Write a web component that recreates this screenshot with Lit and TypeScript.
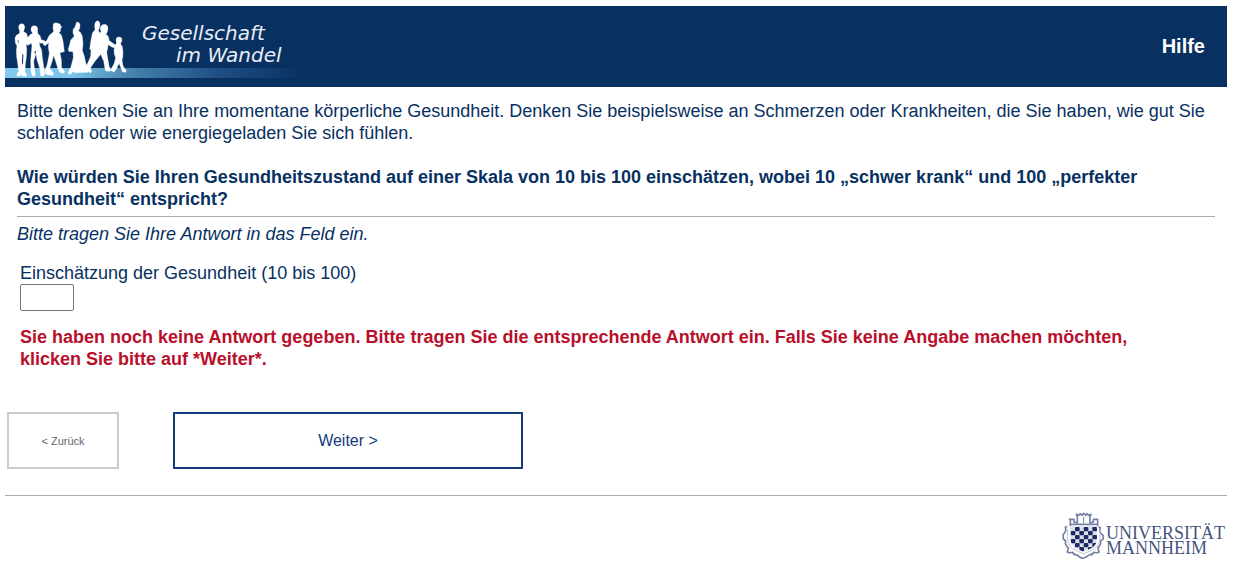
import { LitElement, html, css, svg } from "lit";
import { customElement, state } from "lit/decorators.js";

const walkers = svg`
  <g fill="#fff" stroke="#fff" stroke-width="1" stroke-linejoin="round">
    <g transform="translate(30 54)">
      <ellipse cx="35" cy="28" rx="9" ry="11"/>
      <path d="M29 35h12v6l8 5 4 10-2 12-3 6 2 20-1 24-3 22-1 22 6 10-3 3H37l-1-5h-4l-1 4H21v-6l5-8-3-24-3-20-1-20 2-12-5-10-1-14 4-8 10-6z"/>
      <ellipse cx="73" cy="34" rx="10" ry="11"/>
      <path d="M66 38l16 1 2 8 6 6 4 12 10 3 1 6-13 2-4-3 1 10 6 14 2 22 4 26 3 22-4 8-8-2-2-20-9-28-3-18-7 22 2 20 3 20-3 6-6-1-4-14-1-32 2-26 2-18-2-8-11 6-7-6-3-6 8-8 9-12 8-4z"/>
      <path d="M130 17l8-3 12 4 2 6 4 3-4 4-1 9-4 4 7 7 5 18 4 32-13 3 4 22 1 24 9 10-3 6-10-2-7-12-9-28-4-12-6 22-6 18 9 10 4 6-4 4-14-1-8-4-1-7 7-22 6-32-3-18 1-14-10 9-7-4 1-5 10-6 8-16 11-9 2-4-2-8z"/>
    </g>
    <g transform="translate(204 54)">
      <path d="M26 12q9 0 10 9l-1 11-4 6 6 5 6 12 2 22-2 20 6 18 5 22 8 22-3 4-38 1-7-4-2 6-10 3-1-6 7-14 8-30-1-18-13-1-1-8 4-12 3-14 8-8 3-4-4-8v-7q-1-7 5-10z"/>
      <path d="M88 8q9 2 8 13l-2 10-3 6 5 10-2 28-4 24-6 20-13 24-9 15-7-3 3-16 10-24 1-20-4-1 3-22 5-26 8-11-1-12q0-12 8-15z"/>
      <path d="M108 19q11 0 12 11l-2 12-4 6 7 8 3 12 14 10 9 6-2 6-12-2-13-8-1 12-3 10 3 18 5 28 6 8-4 4-13-1-2-6-4-24-9-20-18 22-13 18 4 12-4 4-8-7-7-9 4-8 11-14 9-14 10-26v-18l4-18 9-10-2-8q-1-11 11-14z"/>
      <ellipse cx="153" cy="66" rx="9" ry="9"/>
      <path d="M147 70l11 2v6l5 8 2 16-1 18-2 6 3 18 10 14-2 5-9-1-4-10-7-16-7 16-8 10-9-4 2-8 7-12 5-18-4-12-1-12 5-16z"/>
    </g>
  </g>
  <g fill="#083162">
    <path d="M67 162l3 2-1 30-3-4zM109 152l-3 10-3-6zM53 118l3 6-2 8zM306 170l-5 16-12 12 10-16z"/>
  </g>`;

const checkers: Array<[number, number]> = [];
for (let row = 0; row < 6; row++) {
  for (let col = 0; col < 6; col++) {
    if ((row + col) % 2 === 1) checkers.push([92 + col * 13, 126 + row * 12]);
  }
}

const crest = svg`
  <g fill="none" stroke="#7680a6" stroke-width="5" stroke-linejoin="round" stroke-linecap="round">
    <path d="M91 121V104l-3-1h14v8l10 3V94l-3-6 8 3 4-5 5 5 5-6 5 6 5-5 4 5 8-3-3 6v20l10-3v-8h13v18"/>
    <path d="M91 118h82"/>
    <path d="M131 97v16" stroke-width="3"/>
    <path d="M80 125l-4 2 2 8-4 8-5 7 1 12 7 6-1 8 5 9 4 3-3 13q7 4 16 1 3 8 13 8l9 7q5 3 11 2t10-5l8-5q9 1 12-7 9 3 16-1l-3-13 4-4 4-8-1-8 8-5 1-11-8-7-3-8 2-9-4-2"/>
  </g>
  <path d="M83 134v27q2 27 25 35l23 11 23-11q23-8 26-35v-27" fill="none" stroke="#bcc2d4" stroke-width="3"/>
  <clipPath id="shield"><path d="M91 124h80v36q0 22-18 30l-22 11-22-11q-18-8-18-30z"/></clipPath>
  <path d="M91 124h80v36q0 22-18 30l-22 11-22-11q-18-8-18-30z" fill="#dde1eb"/>
  <g clip-path="url(#shield)" fill="#1b2b66">
    ${checkers.map(([x, y]) => svg`<rect x=${x} y=${y} width="14" height="13" rx="3"></rect>`)}
  </g>`;

@customElement("app-root")
export class AppRoot extends LitElement {
  static styles = css`
    :host {
      display: block;
      padding: 6px 11px 6px 5px;
      box-sizing: border-box;
      font: 18px/22px "Liberation Sans", Arial, sans-serif;
      color: #083162;
      background: #fff;
    }
    header {
      display: flex;
      justify-content: space-between;
      align-items: center;
      background: #083162;
      padding-right: 22px;
    }
    .brand {
      display: block;
      flex: none;
    }
    .wordmark {
      font-family: "DejaVu Sans", Verdana, sans-serif;
      font-size: 20px;
      font-style: italic;
      fill: #e8edf6;
    }
    .help {
      padding-bottom: 2px;
      color: #fff;
      font-size: 20px;
      font-weight: bold;
      text-decoration: none;
    }
    .question {
      margin: 0 12px;
      padding: 13px 0 6px;
      border-bottom: 1px solid #aaa;
    }
    p,
    h1 {
      margin: 0;
      font-size: 18px;
    }
    h1 {
      margin-top: 22px;
    }
    .hint {
      margin: 6px 12px 0;
      font-style: italic;
    }
    .answer {
      display: flex;
      flex-direction: column;
      align-items: flex-start;
      margin: 17px 15px 0;
    }
    .answer input {
      box-sizing: border-box;
      width: 54px;
      height: 27px;
      border: 1px solid #767676;
      border-radius: 2px;
      padding: 1px 2px;
      font: inherit;
      color: inherit;
      background: #fff;
    }
    .error {
      margin: 15px 60px 0 15px;
      color: #b90f2b;
      font-weight: bold;
    }
    .actions {
      display: flex;
      gap: 54px;
      padding: 42px 2px 26px;
      border-bottom: 1px solid #aaa;
    }
    button {
      height: 57px;
      margin: 0;
      padding: 0;
      background: #fff;
      font-family: inherit;
      border-radius: 0;
      cursor: pointer;
    }
    .back {
      width: 112px;
      border: 2px solid #ccc;
      color: #666;
      font-size: 11px;
    }
    .next {
      width: 350px;
      border: 2px solid #153a7a;
      color: #153a7a;
      font-size: 16px;
    }
    footer {
      display: flex;
      justify-content: flex-end;
      padding-top: 16px;
    }
    .university {
      display: block;
    }
    .seal {
      font-family: "Liberation Serif", "Times New Roman", serif;
      font-size: 18px;
      fill: #46547f;
    }
  `;

  @state() private rating = "";

  private onInput(event: Event) {
    this.rating = (event.target as HTMLInputElement).value;
  }

  render() {
    return html`
      <header>
        <svg class="brand" width="305" height="81" viewBox="5 6 305 81" role="img" aria-label="Gesellschaft im Wandel">
          <defs>
            <linearGradient id="band">
              <stop offset="0" stop-color="#83cbee"></stop>
              <stop offset="0.22" stop-color="#7cc4e8"></stop>
              <stop offset="0.42" stop-color="#4683ae"></stop>
              <stop offset="0.7" stop-color="#205086"></stop>
              <stop offset="1" stop-color="#083162"></stop>
            </linearGradient>
          </defs>
          <rect x="5" y="68" width="300" height="10" fill="url(#band)"></rect>
          <g transform="scale(0.33333)">${walkers}</g>
          <text class="wordmark" x="142" y="40">Gesellschaft</text>
          <text class="wordmark" x="176" y="62">im Wandel</text>
        </svg>
        <a class="help" href="#hilfe">Hilfe</a>
      </header>
      <main>
        <section class="question">
          <p>
            Bitte denken Sie an Ihre momentane körperliche Gesundheit. Denken Sie beispielsweise an Schmerzen oder
            Krankheiten, die Sie haben, wie gut Sie schlafen oder wie energiegeladen Sie sich fühlen.
          </p>
          <h1>
            Wie würden Sie Ihren Gesundheitszustand auf einer Skala von 10 bis 100 einschätzen, wobei 10 „schwer
            krank“ und 100 „perfekter Gesundheit“ entspricht?
          </h1>
        </section>
        <p class="hint">Bitte tragen Sie Ihre Antwort in das Feld ein.</p>
        <div class="answer">
          <label for="rating">Einschätzung der Gesundheit (10 bis 100)</label>
          <input id="rating" type="text" inputmode="numeric" maxlength="3" .value=${this.rating} @input=${this.onInput} />
        </div>
        <p class="error" role="alert">
          Sie haben noch keine Antwort gegeben. Bitte tragen Sie die entsprechende Antwort ein. Falls Sie keine Angabe
          machen möchten, klicken Sie bitte auf *Weiter*.
        </p>
        <nav class="actions">
          <button class="back" type="button">&lt; Zurück</button>
          <button class="next" type="button">Weiter &gt;</button>
        </nav>
      </main>
      <footer>
        <svg class="university" width="167" height="48" viewBox="1060 512 167 48" role="img" aria-label="Universität Mannheim">
          <g transform="translate(1040 485) scale(0.33333)">${crest}</g>
          <text class="seal" x="1106" y="539">UNIVERSITÄT</text>
          <text class="seal" x="1106" y="554">MANNHEIM</text>
        </svg>
      </footer>
    `;
  }
}
